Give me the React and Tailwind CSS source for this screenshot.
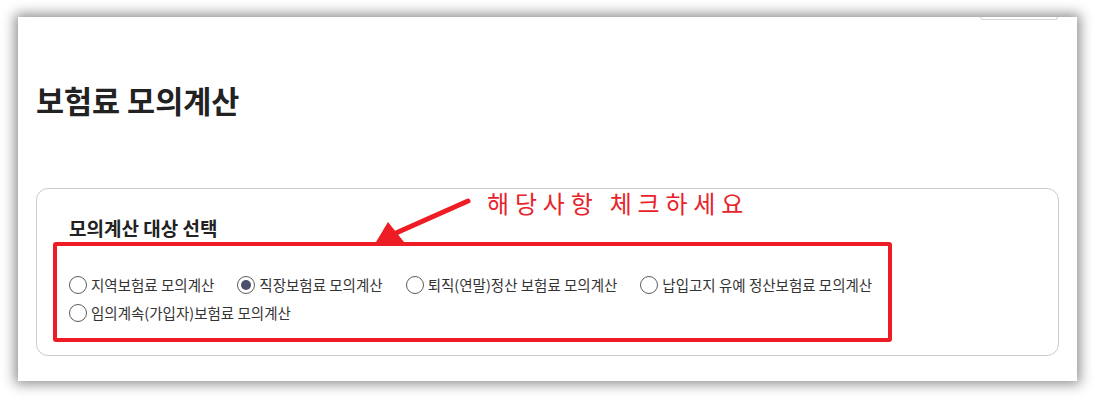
import React, { useState } from 'react';

const options = [
  ['local', '지역보험료 모의계산'],
  ['work', '직장보험료 모의계산'],
  ['retire', '퇴직(연말)정산 보험료 모의계산'],
  ['defer', '납입고지 유예 정산보험료 모의계산'],
];

const Radio = ({ checked, label, onClick }) => (
  <button type="button" onClick={onClick} className="flex items-center gap-[4px] h-[28px] shrink-0">
    <span className="shrink-0 w-[18px] h-[18px] rounded-full border-[1.5px] border-[#5c5c5c] bg-white flex items-center justify-center">
      {checked && <span className="w-[10px] h-[10px] rounded-full bg-[#4b4f6b]" />}
    </span>
    <span className="text-[14.5px] text-[#333333] leading-[28px] whitespace-nowrap">{label}</span>
  </button>
);

export default function App() {
  const [selected, setSelected] = useState('work');

  return (
    <div className="w-[1095px] h-[400px] bg-white pl-[18px] pt-[17px] font-['Noto_Sans_CJK_KR','Noto_Sans',sans-serif]">
      <div className="relative w-[1059px] h-[364px] bg-white shadow-[0_0_12px_3px_rgba(0,0,0,0.45)] px-[18px]">
        {/* 상단 버튼 (잘림) */}
        <div className="flex justify-end pr-[1px]">
          <div className="w-[78px] h-[3px] border-x border-b border-[#d4d4d4] rounded-b-[4px]" />
        </div>

        <h1 className="mt-[60px] text-[30.5px] font-bold leading-[40px] text-[#222222]">보험료 모의계산</h1>

        {/* 모의계산 대상 선택 */}
        <div className="mt-[68px] border border-[#cccccc] rounded-[12px] pt-[25px] pb-[13px] pl-[32px]">
          <h2 className="text-[19px] font-bold leading-[28px] text-[#222222]">모의계산 대상 선택</h2>
          <div className="ml-[-16px] w-[839px] border-4 border-[#ee1c24] rounded-[3px] pl-[12px] pt-[25px] pb-[11px]">
            <div className="flex gap-[23px]">
              {options.map(([key, label]) => (
                <Radio key={key} label={label} checked={selected === key} onClick={() => setSelected(key)} />
              ))}
            </div>
            <div className="flex">
              <Radio label="임의계속(가입자)보험료 모의계산" checked={selected === 'voluntary'} onClick={() => setSelected('voluntary')} />
            </div>
          </div>
        </div>

        {/* 안내 주석 */}
        <span className="absolute left-[469px] top-[170px] text-[24px] leading-[32px] tracking-[5.8px] text-[#e8222a] whitespace-nowrap">
          해당사항 체크하세요
        </span>
        <svg className="absolute left-[340px] top-[170px]" width="150" height="70" viewBox="340 170 150 70">
          <line x1="450" y1="184" x2="378" y2="216" stroke="#ee1c24" strokeWidth="5" strokeLinecap="round" />
          <polygon points="358,225 370,205 386,225" fill="#ee1c24" />
        </svg>
      </div>
    </div>
  );
}
